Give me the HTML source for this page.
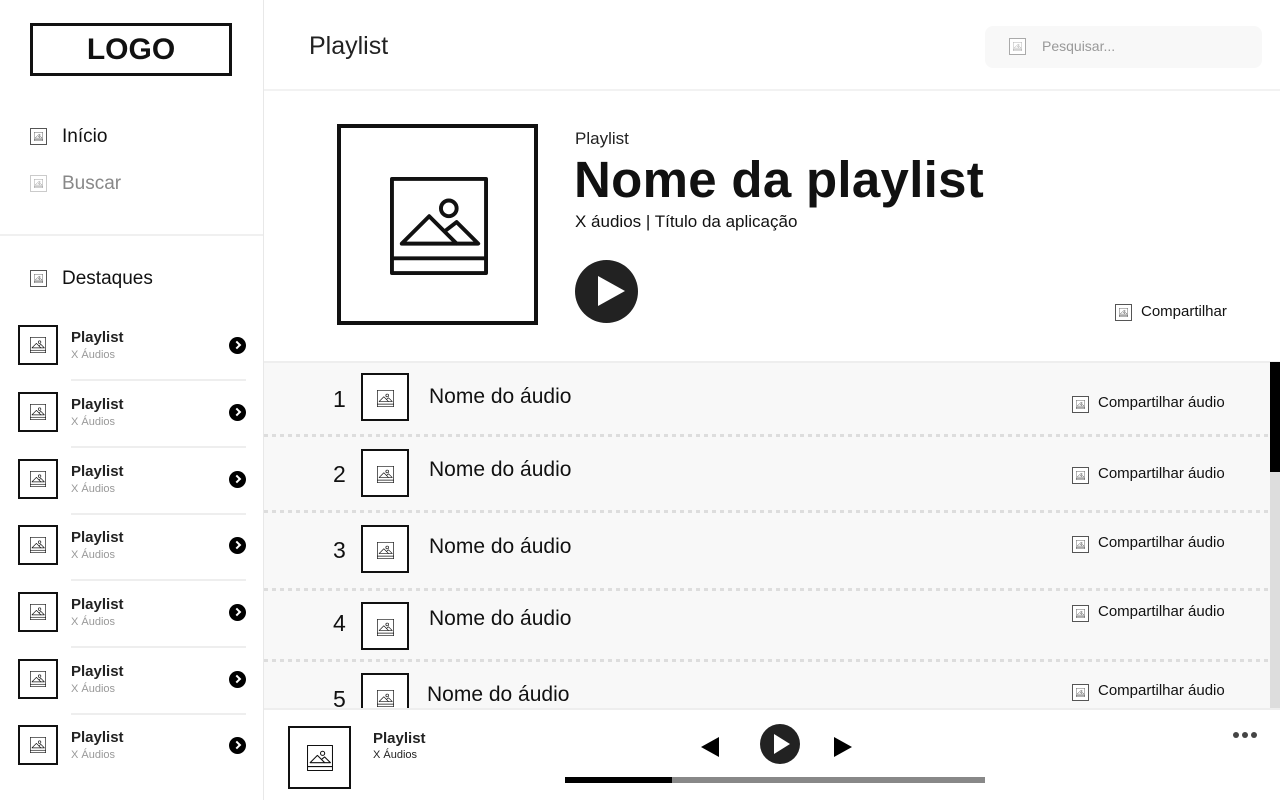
<!DOCTYPE html>
<html><head><meta charset="utf-8"><style>
*{margin:0;padding:0;box-sizing:border-box}
body{width:1280px;height:800px;overflow:hidden;background:#fff;font-family:"Liberation Sans",sans-serif;color:#111;position:relative}
.a{position:absolute}
.ib{position:absolute;border:2px solid #111;background:#fff}
.ib svg{position:absolute}
.si{position:absolute;border:1px solid #555;width:17px;height:17px;background:#fff}
.si svg{position:absolute;left:3px;top:3px}
.dot{position:absolute;width:17px;height:17px;border-radius:50%;background:#000}
.dot:after{content:"";position:absolute;left:5px;top:5px;width:4px;height:4px;border-right:2px solid #fff;border-top:2px solid #fff;transform:rotate(45deg)}
.hr{position:absolute;left:71px;width:175px;height:2px;background:#eee}
.dash{position:absolute;left:264px;width:1006px;height:3px;background:repeating-linear-gradient(90deg,#ddd 0 4px,transparent 4px 8px)}
.pt{font-size:15px;font-weight:bold;color:#222}
.ps{font-size:11px;color:#999}
</style></head><body>
<svg width="0" height="0" style="position:absolute"><defs>
<symbol id="im" viewBox="0 0 100 100"><g fill="none" stroke="#111" stroke-width="4" stroke-linejoin="round"><rect x="2" y="2" width="96" height="96"/><line x1="2" y1="83" x2="98" y2="83"/><circle cx="60" cy="32" r="8"/><path d="M12 68 L40 40 L68 68 Z"/><path d="M55 56 L68 46 L90 68 L68 68"/></g></symbol>
</defs></svg>

<!-- sidebar -->
<div class="a" style="left:263px;top:0;width:1px;height:800px;background:#e8e8e8"></div>
<div class="a" style="left:30px;top:23px;width:202px;height:53px;border:3px solid #111;font-weight:bold;font-size:30px;text-align:center;line-height:47px">LOGO</div>
<div class="si" style="left:30px;top:128px"><svg width="9" height="9"><use href="#im"/></svg></div>
<div class="a" style="left:62px;top:126px;font-size:19px">Início</div>
<div class="si" style="left:30px;top:175px;border-color:#aaa;opacity:.6"><svg width="9" height="9"><use href="#im"/></svg></div>
<div class="a" style="left:62px;top:173px;font-size:19px;color:#888">Buscar</div>
<div class="a" style="left:0;top:234px;width:263px;height:2px;background:#f0f0f0"></div>
<div class="si" style="left:30px;top:270px"><svg width="9" height="9"><use href="#im"/></svg></div>
<div class="a" style="left:62px;top:268px;font-size:19px">Destaques</div>

<div id="side"></div>

<!-- header -->
<div class="a" style="left:309px;top:32px;font-size:25px;color:#222">Playlist</div>
<div class="a" style="left:985px;top:26px;width:277px;height:42px;background:#f8f8f8;border-radius:8px"></div>
<div class="si" style="left:1009px;top:38px;border-color:#aaa"><svg width="9" height="9" style="opacity:.5"><use href="#im"/></svg></div>
<div class="a" style="left:1042px;top:38px;font-size:14px;color:#999">Pesquisar...</div>
<div class="a" style="left:264px;top:89px;width:1016px;height:2px;background:#f2f2f2"></div>

<!-- hero -->
<div class="ib" style="left:337px;top:124px;width:201px;height:201px;border-width:4px"><svg width="98" height="98" style="left:49px;top:49px"><use href="#im"/></svg></div>
<div class="a" style="left:575px;top:129px;font-size:17px;color:#222">Playlist</div>
<div class="a" style="left:574px;top:150px;font-size:51px;font-weight:bold;letter-spacing:0.3px">Nome da playlist</div>
<div class="a" style="left:575px;top:212px;font-size:17px">X áudios | Título da aplicação</div>
<div class="a" style="left:575px;top:260px;width:63px;height:63px;border-radius:50%;background:#222"><div class="a" style="left:23px;top:16px;border-left:27px solid #fff;border-top:15px solid transparent;border-bottom:15px solid transparent"></div></div>
<div class="si" style="left:1115px;top:304px"><svg width="9" height="9"><use href="#im"/></svg></div>
<div class="a" style="left:1141px;top:303px;font-size:15px">Compartilhar</div>

<!-- list -->
<div class="a" style="left:264px;top:361px;width:1016px;height:347px;background:#f8f8f8;border-top:2px solid #eee"></div>
<div class="a" style="left:1270px;top:362px;width:10px;height:346px;background:#ddd"></div>
<div class="a" style="left:1270px;top:362px;width:10px;height:110px;background:#000"></div>
<div id="tracks"></div>

<!-- player -->
<div class="a" style="left:264px;top:708px;width:1016px;height:92px;background:#fff;border-top:2px solid #eee"></div>
<div class="ib" style="left:288px;top:726px;width:63px;height:63px"><svg width="26" height="26" style="left:17px;top:17px"><use href="#im"/></svg></div>
<div class="a pt" style="left:373px;top:730px">Playlist</div>
<div class="a" style="left:373px;top:749px;font-size:11px;color:#222">X Áudios</div>
<div class="a" style="left:701px;top:737px;border-right:18px solid #000;border-top:10px solid transparent;border-bottom:10px solid transparent"></div>
<div class="a" style="left:760px;top:724px;width:40px;height:40px;border-radius:50%;background:#222"><div class="a" style="left:14px;top:10px;border-left:16px solid #fff;border-top:10px solid transparent;border-bottom:10px solid transparent"></div></div>
<div class="a" style="left:834px;top:737px;border-left:18px solid #000;border-top:10px solid transparent;border-bottom:10px solid transparent"></div>
<div class="a" style="left:565px;top:777px;width:420px;height:6px;background:#888"></div>
<div class="a" style="left:565px;top:777px;width:107px;height:6px;background:#000"></div>
<div class="a" style="left:1233px;top:732px;font-size:0">
<span style="display:inline-block;width:6px;height:6px;border-radius:50%;background:#444;margin-right:3px"></span><span style="display:inline-block;width:6px;height:6px;border-radius:50%;background:#444;margin-right:3px"></span><span style="display:inline-block;width:6px;height:6px;border-radius:50%;background:#444"></span></div>

<script>
var s='',ys=[325,392,459,525,592,659,725];
ys.forEach(function(y,i){
s+='<div class="ib" style="left:18px;top:'+y+'px;width:40px;height:40px"><svg width="16" height="16" style="left:10px;top:10px"><use href="#im"/></svg></div>'+
'<div class="a pt" style="left:71px;top:'+(y+4)+'px">Playlist</div><div class="a ps" style="left:71px;top:'+(y+24)+'px">X Áudios</div>'+
'<div class="dot" style="left:229px;top:'+(y+12)+'px"></div>';
if(i<6)s+='<div class="hr" style="top:'+(y+54)+'px"></div>';
});
document.getElementById('side').outerHTML=s;
var t='',rows=[[373,386,385,403],[449,461,458,474],[525,537,535,543],[602,610,607,612],[673,686,683,691]],dv=[434,510,588,659];
rows.forEach(function(r,i){
t+='<div class="a" style="left:333px;top:'+r[1]+'px;font-size:23px">'+(i+1)+'</div>'+
'<div class="ib" style="left:361px;top:'+r[0]+'px;width:48px;height:48px"><svg width="17" height="17" style="left:14px;top:15px"><use href="#im"/></svg></div>'+
'<div class="a" style="left:'+(i==4?427:429)+'px;top:'+r[2]+'px;font-size:21px">Nome do áudio</div>'+
'<div class="si" style="left:1072px;top:'+(r[3]-7)+'px"><svg width="9" height="9"><use href="#im"/></svg></div>'+
'<div class="a" style="left:1098px;top:'+(r[3]-9)+'px;font-size:15px">Compartilhar áudio</div>';
});
dv.forEach(function(y){t+='<div class="dash" style="top:'+y+'px"></div>';});
document.getElementById('tracks').outerHTML=t;
</script>
</body></html>
